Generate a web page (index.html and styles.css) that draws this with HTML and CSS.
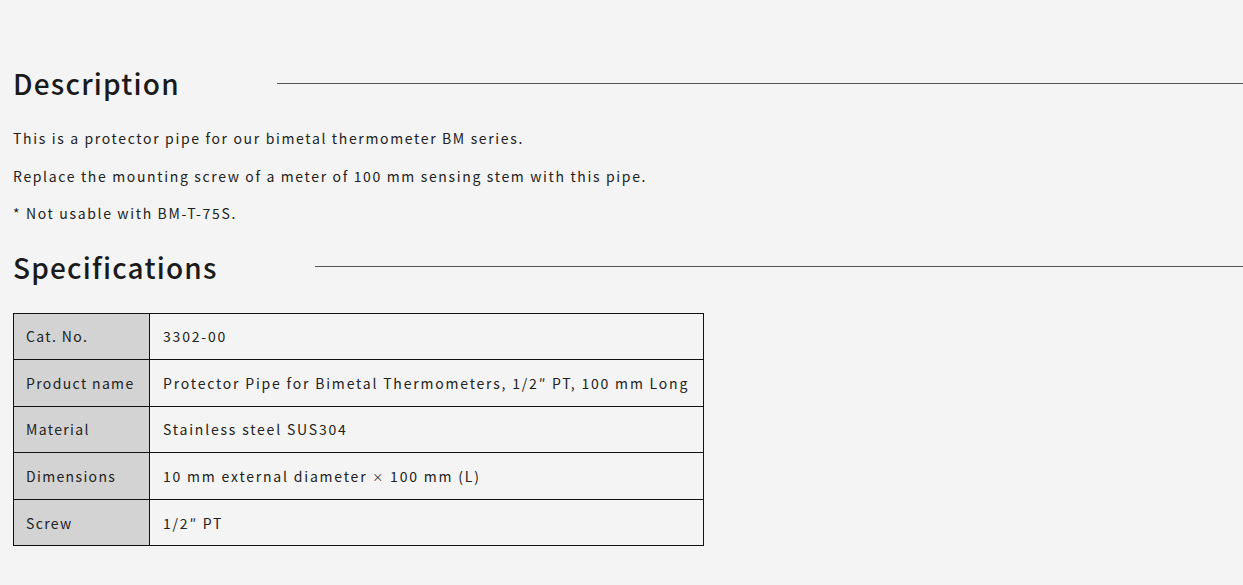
FILE: index.html
```html
<!DOCTYPE html>
<html lang="en">
<head>
<meta charset="utf-8">
<title>Protector Pipe</title>
<link rel="stylesheet" href="styles.css">
</head>
<body>
<main class="content">
  <section class="section">
    <h2 class="heading"><span class="heading-text">Description</span><span class="heading-rule"></span></h2>
    <p class="text">This is a protector pipe for our bimetal thermometer BM series.</p>
    <p class="text">Replace the mounting screw of a meter of 100 mm sensing stem with this pipe.</p>
    <p class="text">* Not usable with BM-T-75S.</p>
  </section>
  <section class="section">
    <h2 class="heading"><span class="heading-text">Specifications</span><span class="heading-rule"></span></h2>
    <table class="spec">
      <tr><th>Cat. No.</th><td>3302-00</td></tr>
      <tr><th>Product name</th><td>Protector Pipe for Bimetal Thermometers, 1/2″ PT, 100 mm Long</td></tr>
      <tr><th>Material</th><td>Stainless steel SUS304</td></tr>
      <tr><th>Dimensions</th><td>10 mm external diameter <span class="times">×</span> 100 mm (L)</td></tr>
      <tr><th>Screw</th><td>1/2″ PT</td></tr>
    </table>
  </section>
</main>
</body>
</html>
```
FILE: styles.css
```css
html, body {
  margin: 0;
  padding: 0;
  background: #f4f4f4;
}
body {
  font-family: "Noto Sans CJK JP", "Noto Sans", sans-serif;
  color: #222;
}
.content {
  padding: 62px 0 0 13px;
}
.heading {
  display: flex;
  align-items: center;
  gap: 97px;
  margin: 0;
  font-size: 28px;
  font-weight: 500;
  letter-spacing: 1.2px;
  line-height: 42px;
  color: #1a1a1a;
}
.heading-rule {
  flex: 1;
  height: 1px;
  background: #555;
}
.text {
  margin: 0;
  font-size: 14px;
  letter-spacing: 1.65px;
  line-height: 37.5px;
}
.section:first-child .heading {
  margin-bottom: 16px;
}
.section + .section {
  margin-top: 13px;
}
.section:last-child .heading {
  margin-bottom: 25px;
}
.spec {
  border-collapse: collapse;
  table-layout: fixed;
  width: 691px;
  font-size: 14px;
  letter-spacing: 1.8px;
}
.spec th, .spec td {
  border: 1px solid #111;
  height: 45.6px;
  padding: 0 12px;
  text-align: left;
  font-weight: 400;
  white-space: nowrap;
}
.spec th {
  width: 111px;
  background: #d3d3d3;
  letter-spacing: 1.35px;
}
.spec td {
  padding-left: 13px;
}
.times {
  font-size: 11px;
}
```
